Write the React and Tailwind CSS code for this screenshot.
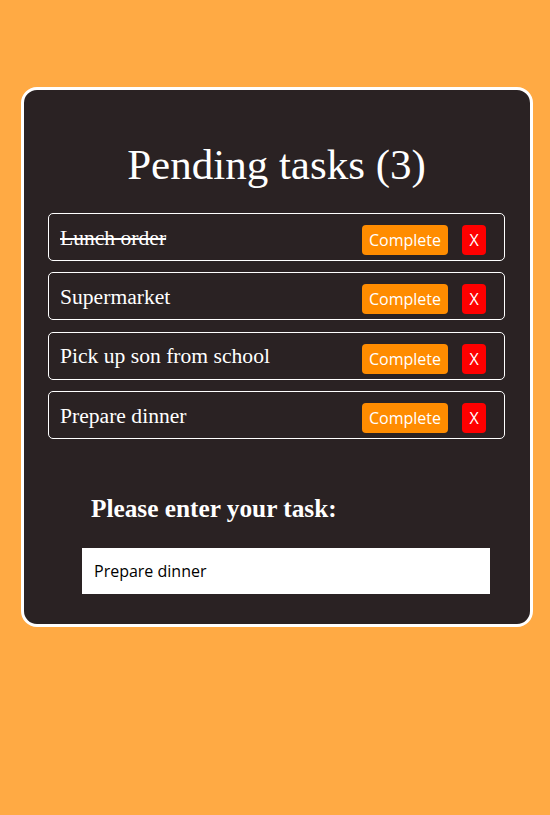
import React from "react";

const tasks = [
  { text: "Lunch order", done: true },
  { text: "Supermarket", done: false },
  { text: "Pick up son from school", done: false },
  { text: "Prepare dinner", done: false },
];

export default function App() {
  return (
    <div className="min-h-[815px] w-full bg-[#ffaa44] pt-[87px]">
      <div className="ml-[21px] w-[512px] rounded-[16px] border-[3px] border-white bg-[#2a2223] pl-[24px] pr-[25px] pb-[30px] pt-[51px]">
        <h1 className="text-center text-[43px] leading-[48px] text-white font-['Liberation_Serif',serif]">
          Pending tasks (3)
        </h1>
        <div className="mt-[24px] flex flex-col gap-[11.3px]">
          {tasks.map((t) => (
            <div
              key={t.text}
              className="flex h-[48px] items-center rounded-[5px] border border-white pl-[11px] pr-[18px]"
            >
              <span
                className={
                  "flex-1 pt-[2px] text-[21.6px] text-white font-['Liberation_Serif',serif] " +
                  (t.done ? "line-through" : "")
                }
              >
                {t.text}
              </span>
              <div className="mt-[6px] flex items-center gap-[14px]">
                <button className="h-[30px] rounded-[4px] bg-[#ff8c00] px-[7px] text-[16px] leading-[30px] text-white font-['Open_Sans',sans-serif]">
                  Complete
                </button>
                <button className="h-[30px] w-[24px] rounded-[4px] bg-[#ff0000] text-center text-[16px] leading-[30px] text-white font-['Open_Sans',sans-serif]">
                  X
                </button>
              </div>
            </div>
          ))}
        </div>
        <h2 className="ml-[43px] mt-[55px] text-[25.3px] font-bold leading-[28px] text-white font-['Liberation_Serif',serif]">
          Please enter your task:
        </h2>
        <input
          type="text"
          defaultValue="Prepare dinner"
          className="ml-[34px] mt-[26px] block h-[46px] w-[408px] bg-white px-[12px] text-[16px] text-black outline-none font-['Open_Sans',sans-serif]"
        />
      </div>
    </div>
  );
}
